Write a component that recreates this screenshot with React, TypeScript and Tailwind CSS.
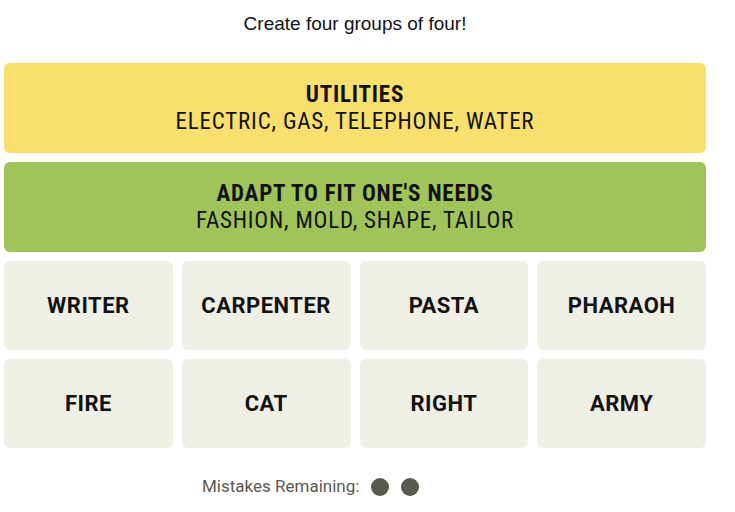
const solved = [
  { title: "UTILITIES", words: "ELECTRIC, GAS, TELEPHONE, WATER", color: "bg-[#f9df6d]" },
  { title: "ADAPT TO FIT ONE'S NEEDS", words: "FASHION, MOLD, SHAPE, TAILOR", color: "bg-[#a0c35a]" },
];

const tiles = ["WRITER", "CARPENTER", "PASTA", "PHARAOH", "FIRE", "CAT", "RIGHT", "ARMY"];

const condensed = { fontFamily: '"Liberation Sans Narrow", "Roboto Condensed", "Liberation Sans", sans-serif' };

export default function App() {
  return (
    <div className="min-h-[512px] w-[735px] bg-white text-[#121212]">
      <div className="ml-1 w-[702px]">
        <p className="pt-[12px] text-center text-[19px] leading-[24px]" style={{ fontFamily: '"Liberation Sans", Arial, sans-serif' }}>
          Create four groups of four!
        </p>
        <div className="mt-[27px] flex flex-col gap-[9px]">
          {solved.map((group) => (
            <div
              key={group.title}
              className={`flex h-[90px] flex-col items-center justify-center rounded-md tracking-[0.05em] ${group.color}`}
              style={condensed}
            >
              <p className="text-[23px] font-bold leading-[27px]">{group.title}</p>
              <p className="text-[23px] leading-[27px]">{group.words}</p>
            </div>
          ))}
          <div className="grid grid-cols-4 gap-[9px]">
            {tiles.map((word) => (
              <div
                key={word}
                className="flex h-[89px] items-center justify-center rounded-md bg-[#efefe6] text-[22px] font-bold tracking-[0.5px]"
                style={{ fontFamily: "Roboto, sans-serif" }}
              >
                {word}
              </div>
            ))}
          </div>
        </div>
        <div className="mt-[26px] flex items-center gap-[12px] pl-[198px] text-[#5a594e]">
          <span className="text-[17px]" style={{ fontFamily: "Roboto, sans-serif" }}>
            Mistakes Remaining:
          </span>
          <span className="h-[18px] w-[18px] rounded-full bg-[#5a594e]" />
          <span className="h-[18px] w-[18px] rounded-full bg-[#5a594e]" />
        </div>
      </div>
    </div>
  );
}
